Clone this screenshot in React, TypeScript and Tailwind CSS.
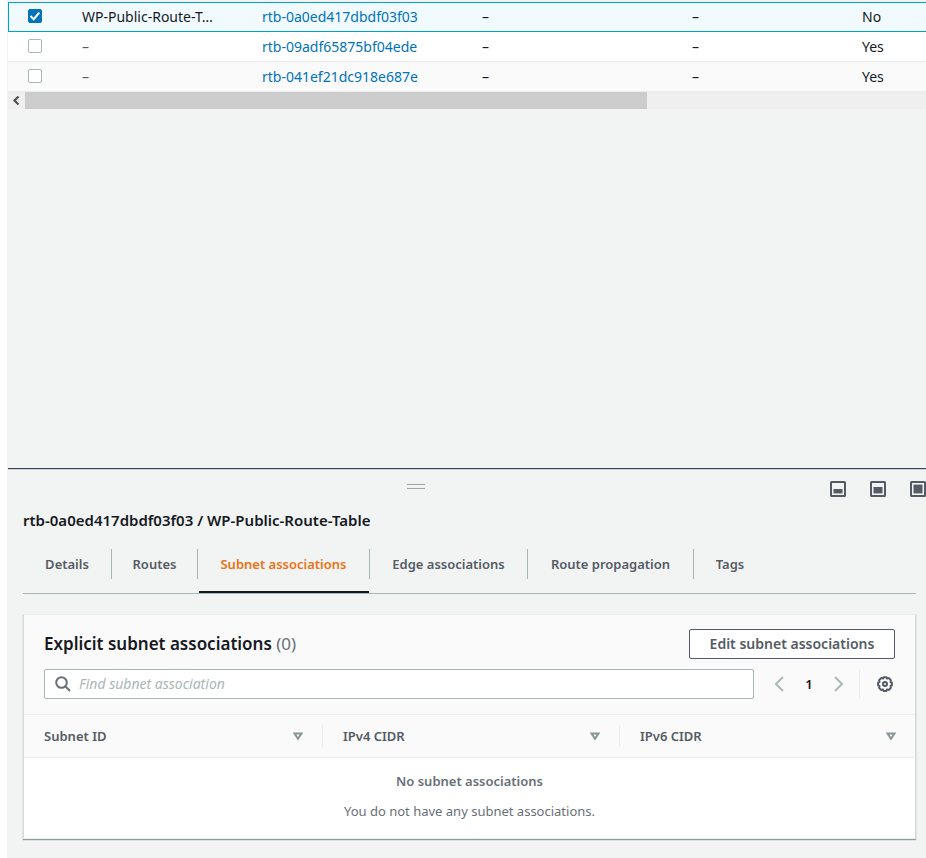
import React from "react";

const routeTables = [
  { name: "WP-Public-Route-T…", id: "rtb-0a0ed417dbdf03f03", main: "No", selected: true },
  { name: "–", id: "rtb-09adf65875bf04ede", main: "Yes", selected: false },
  { name: "–", id: "rtb-041ef21dc918e687e", main: "Yes", selected: false },
];

const tabs = [
  { label: "Details", width: "w-[89px]" },
  { label: "Routes", width: "w-[86px]" },
  { label: "Subnet associations", width: "w-[172px]" },
  { label: "Edge associations", width: "w-[158px]" },
  { label: "Route propagation", width: "w-[166px]" },
  { label: "Tags", width: "w-[72px]" },
];

const columns = ["Subnet ID", "IPv4 CIDR", "IPv6 CIDR"];

function RowCheckbox({ label, checked }: { label: string; checked: boolean }) {
  return (
    <span className="relative block size-3.5">
      <input
        type="checkbox"
        aria-label={label}
        defaultChecked={checked}
        className="peer block size-3.5 appearance-none rounded-xs border border-[#aab7b8] bg-white checked:border-[#0073bb] checked:bg-[#0073bb]"
      />
      <svg
        viewBox="0 0 14 14"
        className="pointer-events-none absolute inset-0 hidden size-3.5 peer-checked:block"
        fill="none"
        stroke="white"
        strokeWidth="2"
      >
        <path d="M2.5 7l3.2 3.2L11.3 3.6" />
      </svg>
    </span>
  );
}

function RouteTableList() {
  const line = (selected: boolean) =>
    selected ? "border-y border-[#00a1c9]" : "border-b border-[#eaeded]";
  return (
    <section className="pt-0.5 text-sm">
      <table className="w-full table-fixed border-separate border-spacing-0">
        <colgroup>
          <col className="w-[54px]" />
          <col className="w-[180px]" />
          <col className="w-[220px]" />
          <col className="w-[210px]" />
          <col className="w-[170px]" />
          <col />
        </colgroup>
        <tbody>
          {routeTables.map((row, i) => {
            const cell = `h-[30px] p-0 pl-5 whitespace-nowrap ${line(row.selected)}`;
            return (
              <tr
                key={row.id}
                className={row.selected ? "bg-[#f1faff]" : i === 2 ? "bg-[#fafafa]" : "bg-white"}
              >
                <td
                  className={`${cell} pb-0.5 ${row.selected ? "border-l border-l-[#00a1c9] pl-[19px]" : ""}`}
                >
                  <RowCheckbox label={`Select ${row.id}`} checked={row.selected} />
                </td>
                <td className={`${cell} ${row.selected ? "" : "text-[#545b64]"}`}>{row.name}</td>
                <td className={cell}>
                  <a href="#" className="text-[#0073bb]">
                    {row.id}
                  </a>
                </td>
                <td className={cell}>–</td>
                <td className={cell}>–</td>
                <td className={cell}>{row.main}</td>
              </tr>
            );
          })}
        </tbody>
      </table>
      <div className="flex h-[17px] bg-[#efefef]">
        <button
          type="button"
          aria-label="Scroll left"
          className="flex w-[17px] items-center justify-center text-[#505050]"
        >
          <svg width="9" height="9" viewBox="0 0 9 9" fill="none" stroke="currentColor" strokeWidth="2.2">
            <path d="M6.5 0.500L2.500 4.500l4 4" />
          </svg>
        </button>
        <div className="flex-1">
          <div className="h-full w-[69%] bg-[#cccccc]" />
        </div>
      </div>
    </section>
  );
}

function PanelSizeIcon({ fill }: { fill: "low" | "half" | "full" }) {
  const y = { low: 8, half: 6, full: 3.6 }[fill];
  return (
    <svg width="16" height="16" viewBox="0 0 16 16" fill="none">
      <rect x="1" y="1" width="14" height="14" rx="0.5" stroke="#545b64" strokeWidth="2" />
      <rect x="3.500" y={y} width="9" height={12.4 - y} fill="#545b64" />
    </svg>
  );
}

function SortIcon() {
  return (
    <svg width="10" height="9" viewBox="0 0 10 9" fill="none" stroke="#879596" strokeWidth="2">
      <path d="M1.5 1.5h7L5 6.8z" />
    </svg>
  );
}

function GearIcon() {
  return (
    <svg width="16" height="16" viewBox="0 0 16 16" fill="none" stroke="#545b64" strokeWidth="2">
      <path
        strokeLinejoin="round"
        d="M6.600 1.200h2.800l.6 1.300 1.900-.4 2 2-.4 1.900 1.400.6v2.800l-1.400.6.4 1.900-2 2-1.900-.4-.6 1.400H6.600L6 13.500l-1.900.4-2-2 .4-1.900-1.400-.6V6.600l1.400-.6-.4-1.900 2-2 1.900.4z"
      />
      <circle cx="8" cy="8" r="2" />
    </svg>
  );
}

function Chevron({ direction }: { direction: "left" | "right" }) {
  return (
    <svg width="10" height="16" viewBox="0 0 10 16" fill="none" stroke="#aab7b8" strokeWidth="2">
      <path d={direction === "left" ? "M9 1L2 8l7 7" : "M1 1l7 7-7 7"} />
    </svg>
  );
}

function SubnetAssociations() {
  return (
    <section className="border border-[#eaeded] border-r-[#d5dbdb] border-l-[#d5dbdb] bg-white shadow-[0_1px_1px_0_rgba(0,28,36,0.4)]">
      <div className="bg-[#fafafa] px-5 pt-3.5 pb-[15px]">
        <div className="flex items-center justify-between">
          <h2 className="text-[17px] leading-[30px] font-semibold">
            Explicit subnet associations <span className="font-normal text-[#687078]">(0)</span>
          </h2>
          <button
            type="button"
            className="h-[30px] w-[206px] rounded-xs border border-[#545b64] bg-white text-sm font-semibold text-[#545b64]"
          >
            Edit subnet associations
          </button>
        </div>
        <div className="mt-2.5 flex h-[30px] items-center">
          <label className="flex h-full flex-1 items-center gap-2 rounded-xs border border-[#aab7b8] bg-white px-2.5">
            <svg width="16" height="16" viewBox="0 0 16 16" fill="none" stroke="#687078" strokeWidth="2">
              <circle cx="6.500" cy="6.500" r="5.300" />
              <path d="M10.300 10.300l4.700 4.700" />
            </svg>
            <input
              type="text"
              aria-label="Find subnet association"
              placeholder="Find subnet association"
              className="min-w-0 flex-1 bg-transparent text-sm outline-none placeholder:text-[#aab7b8] placeholder:italic"
            />
          </label>
          <nav aria-label="Pagination" className="ml-5 flex items-center">
            <button type="button" aria-label="Previous page">
              <Chevron direction="left" />
            </button>
            <span className="w-[50px] text-center font-semibold">1</span>
            <button type="button" aria-label="Next page">
              <Chevron direction="right" />
            </button>
          </nav>
          <button
            type="button"
            aria-label="Preferences"
            className="ml-[15px] flex h-full w-9 items-center justify-end border-l border-[#eaeded] pr-0.5"
          >
            <GearIcon />
          </button>
        </div>
      </div>
      <table className="w-full table-fixed border-separate border-spacing-0">
        <colgroup>
          <col className="w-[299px]" />
          <col className="w-[297px]" />
          <col />
        </colgroup>
        <thead>
          <tr className="bg-[#fafafa]">
            {columns.map((name, i) => (
              <th
                key={name}
                className="h-11 border-y border-[#eaeded] p-0 text-left font-semibold text-[#545b64]"
              >
                <div
                  className={`flex h-[22px] items-center justify-between pr-[19px] pl-5 ${
                    i < 2 ? "border-r border-[#eaeded]" : ""
                  }`}
                >
                  {name}
                  <SortIcon />
                </div>
              </th>
            ))}
          </tr>
        </thead>
        <tbody>
          <tr>
            <td colSpan={3} className="px-5 pt-2 pb-3 text-center text-[#687078]">
              <p className="leading-[30px] font-semibold">No subnet associations</p>
              <p className="leading-[30px]">You do not have any subnet associations.</p>
            </td>
          </tr>
        </tbody>
      </table>
    </section>
  );
}

function DetailsPanel() {
  return (
    <section className="border-t border-[#37475a] pb-[19px] shadow-[inset_0_1px_0_0_#cdd1d2]">
      <div className="flex items-start pt-3">
        <div className="flex flex-1 justify-center pt-[3px]">
          <div className="h-[5px] w-[18px] border-y border-[#a0a6a6]" />
        </div>
        <div className="ml-1.5 flex gap-6">
          <button type="button" aria-label="Collapse panel">
            <PanelSizeIcon fill="low" />
          </button>
          <button type="button" aria-label="Half height panel">
            <PanelSizeIcon fill="half" />
          </button>
          <button type="button" aria-label="Full height panel">
            <PanelSizeIcon fill="full" />
          </button>
        </div>
      </div>
      <div className="pr-2.5 pl-[15px]">
        <h1 className="mt-3 text-[15px] leading-[22px] font-semibold">
          rtb-0a0ed417dbdf03f03 / WP-Public-Route-Table
        </h1>
        <div role="tablist" className="mb-5 flex border-b border-[#aab7b8] pt-[18px]">
          {tabs.map((tab, i) => {
            const active = i === 2;
            return (
              <button
                key={tab.label}
                type="button"
                role="tab"
                aria-selected={active}
                className={`relative h-11 shrink-0 pb-3.5 font-semibold whitespace-nowrap ${tab.width} ${
                  active ? "text-[#ec7211]" : "text-[#545b64]"
                }`}
              >
                <span
                  className={`block leading-[30px] ${
                    i < tabs.length - 1 ? "border-r border-[#aab7b8]" : ""
                  }`}
                >
                  {tab.label}
                </span>
                {active && <span className="absolute inset-x-px bottom-0 h-0.5 bg-[#16191f]" />}
              </button>
            );
          })}
        </div>
        <SubnetAssociations />
      </div>
    </section>
  );
}

export default function App() {
  return (
    <div className="min-h-screen bg-white pl-[7px] font-['Noto_Sans',sans-serif] text-[13px] leading-5 text-[#16191f]">
      <main className="flex min-h-screen flex-col bg-[#f2f4f4] pl-px">
        <div className="flex-1">
          <RouteTableList />
        </div>
        <DetailsPanel />
      </main>
    </div>
  );
}
